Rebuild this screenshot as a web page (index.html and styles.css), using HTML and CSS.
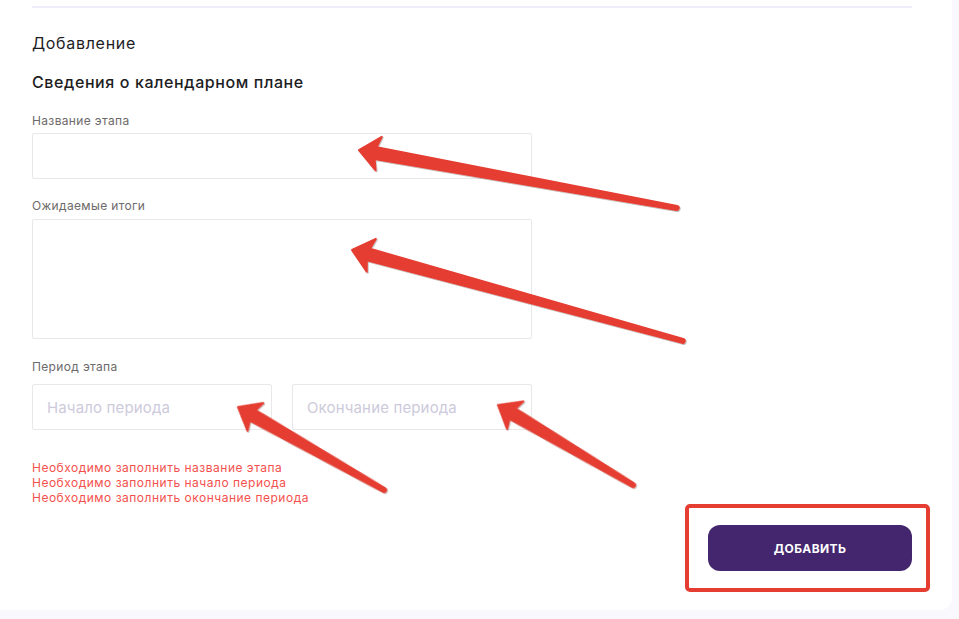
FILE: index.html
```html
<!DOCTYPE html>
<html lang="ru">
<head>
<meta charset="utf-8">
<title>Добавление</title>
<link rel="stylesheet" href="styles.css">
</head>
<body>
<div class="page">
  <div class="card">
    <div class="divider"></div>
    <h2 class="title">Добавление</h2>
    <h3 class="subtitle">Сведения о календарном плане</h3>
    <div class="field field-first">
      <label class="label">Название этапа</label>
      <div class="input"></div>
    </div>
    <div class="field">
      <label class="label">Ожидаемые итоги</label>
      <div class="input textarea"></div>
    </div>
    <div class="field field-period">
      <label class="label label-period">Период этапа</label>
      <div class="period">
        <div class="input date"><span class="placeholder">Начало периода</span></div>
        <div class="input date"><span class="placeholder">Окончание периода</span></div>
      </div>
    </div>
    <div class="errors">
      <div>Необходимо заполнить название этапа</div>
      <div>Необходимо заполнить начало периода</div>
      <div>Необходимо заполнить окончание периода</div>
    </div>
    <div class="actions">
      <button class="btn">ДОБАВИТЬ</button>
    </div>
  </div>
</div>

<div class="highlight"></div>
<svg class="annotations" width="959" height="619" viewBox="0 0 959 619">
  <defs>
    <filter id="sh" x="-10%" y="-10%" width="120%" height="120%">
      <feDropShadow dx="0.8" dy="1" stdDeviation="0.6" flood-color="#000" flood-opacity="0.28"/>
    </filter>
  </defs>
  <g fill="#e53d31" stroke="#e53d31" stroke-width="2" stroke-linejoin="round" filter="url(#sh)">
    <path transform="translate(359,150) rotate(10.34)" d="M0,0 L20,-17 L17,-6 L323,-2 A2,2 0 0 1 323,2 L17,6 L20,17 Z"/>
    <path transform="translate(352,250) rotate(15.37)" d="M0,0 L20,-17 L17,-6 L343,-2 A2,2 0 0 1 343,2 L17,6 L20,17 Z"/>
    <path transform="translate(238,407) rotate(29.6)" d="M0,0 L20,-16 L17,-6 L168,-2 A2,2 0 0 1 168,2 L17,6 L20,16 Z"/>
    <path transform="translate(498,405) rotate(30.65)" d="M0,0 L20,-16 L17,-6 L157,-2 A2,2 0 0 1 157,2 L17,6 L20,16 Z"/>
  </g>
</svg>
</body>
</html>
```
FILE: styles.css
```css
* { box-sizing: border-box; }
html, body {
  margin: 0;
  padding: 0;
  background: #f8f8fd;
  font-family: "Inter", "Noto Sans", "Liberation Sans", sans-serif;
  color: #1d1d1f;
}
.page {
  width: 959px;
  height: 619px;
  overflow: hidden;
}
.card {
  width: 952px;
  height: 610px;
  background: #fff;
  border-bottom-right-radius: 12px;
  padding: 6px 40px 0 32px;
  display: flex;
  flex-direction: column;
}
.divider {
  height: 2px;
  background: #efeefb;
}
.title {
  margin: 25px 0 0;
  font-size: 16px;
  line-height: 20px;
  font-weight: 400;
  letter-spacing: 0.7px;
}
.subtitle {
  margin: 19px 0 0;
  font-size: 16px;
  line-height: 20px;
  font-weight: 500;
  letter-spacing: 0.6px;
}
.field {
  display: flex;
  flex-direction: column;
  margin-top: 19px;
}
.field-first { margin-top: 21px; }
.field-period { margin-top: 20px; }
.label {
  font-size: 12px;
  line-height: 16px;
  color: #6d6a6a;
  margin-bottom: 5px;
  letter-spacing: 0.35px;
}
.field-first .label { margin-bottom: 4px; }
.label-period { margin-bottom: 9px; }
.input {
  width: 500px;
  height: 46px;
  border: 1px solid #e8e8ea;
  border-radius: 2px;
  background: #fff;
}
.textarea { height: 120px; }
.period {
  display: flex;
  gap: 20px;
  width: 500px;
}
.date {
  width: 240px;
  display: flex;
  align-items: center;
  padding-left: 14px;
}
.placeholder {
  font-size: 15px;
  color: #cdcadb;
  letter-spacing: 0.15px;
}
.errors {
  margin-top: 30px;
  font-size: 12px;
  line-height: 15px;
  color: #f4514e;
  letter-spacing: 0.5px;
}
.actions {
  display: flex;
  justify-content: flex-end;
  margin-top: 20px;
}
.btn {
  width: 204px;
  height: 46px;
  border: none;
  border-radius: 12px;
  background: #43266d;
  color: #fff;
  font-family: inherit;
  font-size: 12px;
  font-weight: 700;
  letter-spacing: 0.4px;
}
.highlight {
  position: absolute;
  left: 685px;
  top: 504px;
  width: 245px;
  height: 88px;
  border: 4px solid #e53d31;
  border-radius: 5px;
}
.annotations {
  position: absolute;
  left: 0;
  top: 0;
  pointer-events: none;
}
```
